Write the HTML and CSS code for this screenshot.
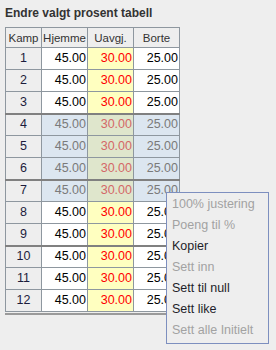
FILE: index.html
```html
<!DOCTYPE html>
<html lang="no">
<head>
    <meta charset="UTF-8">
    <title>Endre valgt prosent tabell</title>
    <link rel="stylesheet" href="styles.css">
</head>
<body>
    <div class="title">Endre valgt prosent tabell</div>

    <div class="pane">
        <table class="grid">
            <thead>
                <tr>
                    <th class="c-kamp">Kamp</th>
                    <th class="c-num">Hjemme</th>
                    <th class="c-num">Uavgj.</th>
                    <th class="c-num">Borte</th>
                </tr>
            </thead>
            <tbody>
                <tr><td class="kamp">1</td><td>45.00</td><td class="draw">30.00</td><td>25.00</td></tr>
                <tr><td class="kamp">2</td><td>45.00</td><td class="draw">30.00</td><td>25.00</td></tr>
                <tr><td class="kamp">3</td><td>45.00</td><td class="draw">30.00</td><td>25.00</td></tr>
                <tr class="sep sel"><td class="kamp">4</td><td>45.00</td><td class="draw">30.00</td><td>25.00</td></tr>
                <tr class="sel"><td class="kamp">5</td><td>45.00</td><td class="draw">30.00</td><td>25.00</td></tr>
                <tr class="sel"><td class="kamp">6</td><td>45.00</td><td class="draw">30.00</td><td>25.00</td></tr>
                <tr class="sep sel"><td class="kamp">7</td><td>45.00</td><td class="draw">30.00</td><td>25.00</td></tr>
                <tr><td class="kamp">8</td><td>45.00</td><td class="draw">30.00</td><td>25.00</td></tr>
                <tr><td class="kamp">9</td><td>45.00</td><td class="draw">30.00</td><td>25.00</td></tr>
                <tr class="sep"><td class="kamp">10</td><td>45.00</td><td class="draw">30.00</td><td>25.00</td></tr>
                <tr><td class="kamp">11</td><td>45.00</td><td class="draw">30.00</td><td>25.00</td></tr>
                <tr><td class="kamp">12</td><td>45.00</td><td class="draw">30.00</td><td>25.00</td></tr>
            </tbody>
        </table>
    </div>

    <ul class="popup">
        <li class="off">100% justering</li>
        <li class="off">Poeng til %</li>
        <li>Kopier</li>
        <li class="off">Sett inn</li>
        <li>Sett til null</li>
        <li>Sett like</li>
        <li class="off">Sett alle Initielt</li>
    </ul>
</body>
</html>
```

FILE: styles.css
```css
body {
    margin: 0;
    background-color: #eeeeee;
    font-family: "Liberation Sans", Arial, sans-serif;
    font-size: 12px;
    color: #111;
}
.title {
    padding: 5px 0 0 5px;
    height: 22px;
    line-height: 16px;
    font-weight: bold;
    font-size: 12px;
    color: #333;
}
.pane {
    margin-left: 5px;
    width: 173px;
    padding-bottom: 1px;
    border-bottom: 2px solid #9a9a9a;
}
.grid {
    border-collapse: collapse;
    table-layout: fixed;
    width: 173px;
}
.grid thead tr {
    height: 20px;
}
.grid th {
    padding: 0;
    font-weight: normal;
    font-size: 11.5px;
    color: #333;
    background-color: #eeeeee;
    border: 1px solid #8e979f;
    text-align: center;
    line-height: 14px;
    white-space: nowrap;
    overflow: hidden;
}
.c-kamp {
    width: 35px;
}
.c-num {
    width: 45px;
}
.grid tbody tr {
    height: 22px;
}
.grid td {
    padding: 0 1px 0 0;
    border: 1px solid #8e979f;
    text-align: right;
    background-color: #ffffff;
    color: #000;
    line-height: 15px;
    font-size: 12.5px;
}
.grid td.kamp {
    text-align: center;
    background-color: #eeeeee;
    color: #1c1c3c;
    padding: 0;
}
.grid td.draw {
    background-color: #ffffc0;
    color: #ff0000;
}
.grid tr.sep td {
    border-top: 2px solid #808080;
}
.grid tr.sel td {
    background-color: #dce6f0;
    color: #7a7a7a;
}
.grid tr.sel td.draw {
    background-color: #dfe6cc;
    color: #d46868;
}
.grid tr.sel td.kamp {
    background-color: #eeeeee;
    color: #1c1c3c;
}
.popup {
    position: absolute;
    left: 166px;
    top: 192px;
    width: 101px;
    margin: 0;
    padding: 1px 0 2px 0;
    list-style: none;
    background-color: #eeeeee;
    border: 1px solid #7d8fbf;
}
.popup li {
    height: 21px;
    line-height: 21px;
    padding-left: 5px;
    font-size: 12.5px;
    color: #1e1e2a;
    white-space: nowrap;
}
.popup li.off {
    color: #a2a2a2;
}
```
